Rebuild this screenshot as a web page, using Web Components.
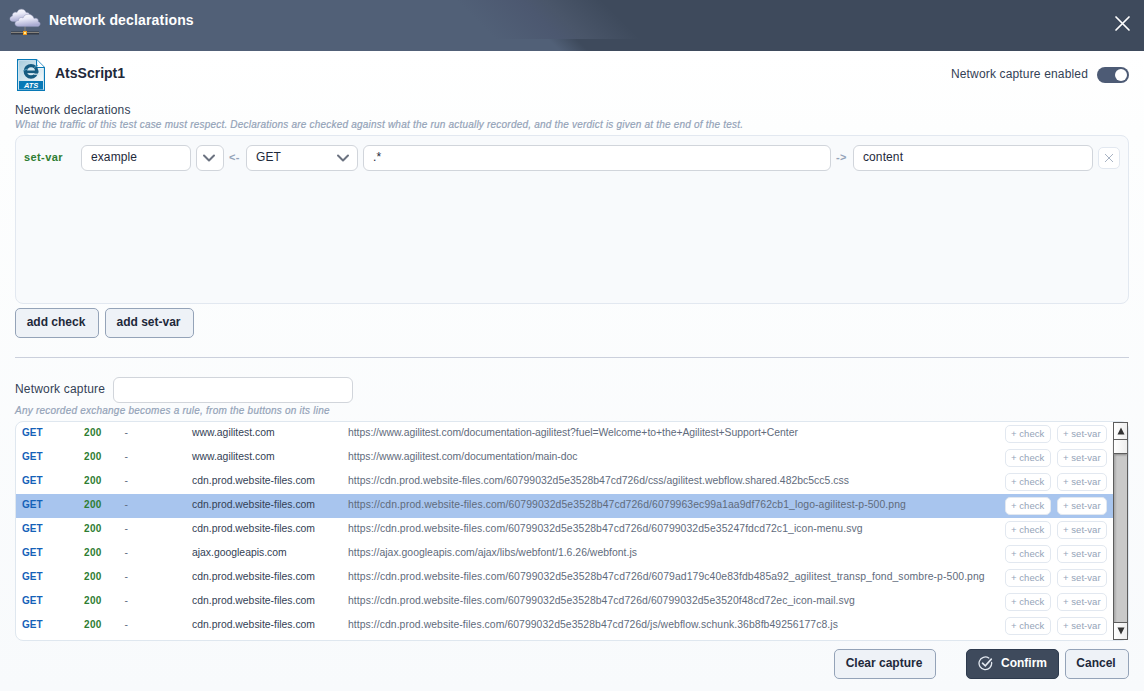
<!DOCTYPE html>
<html lang="en">
<head>
<meta charset="utf-8">
<title>Network declarations</title>
<style>
  body {
    margin: 0;
    font-family: "Liberation Sans", Arial, sans-serif;
    font-size: 12px;
    color: #334155;
  }
</style>
</head>
<body>
<network-dialog></network-dialog>

<script>
class DialogHeader extends HTMLElement {
  constructor() {
    super();
    this.attachShadow({ mode: 'open' });
  }

  connectedCallback() {
    this.shadowRoot.innerHTML = `
      <style>
        :host {
          display: flex;
          height: 51px;
          box-sizing: border-box;
          padding: 7px 13px 0 8px;
          color: #fff;
          background:
            linear-gradient(45deg, #516077 350px, #4c5870 396px, #4a566a 412px, #3e4a5c 453px) 0 0 / 100% 39px no-repeat,
            linear-gradient(45deg, #516077 396px, #3e4a5c 416px);
        }
        .cloud { width: 34px; height: 32px; }
        h1 { margin: 5px 0 0 7px; font-size: 14px; line-height: 17px; letter-spacing: 0.16px; flex: 1; }
        .close { width: 17px; height: 17px; margin-top: 7.500px; }
      </style>
      <svg class="cloud" viewBox="0 0 34 32">
        <defs>
          <linearGradient id="c" x1="0" y1="0" x2=".25" y2="1">
            <stop offset="0" stop-color="#fff"/><stop offset=".45" stop-color="#e9eaf8"/><stop offset="1" stop-color="#a9abd2"/>
          </linearGradient>
        </defs>
        <path d="M3 26h28" stroke="#343a45" stroke-width="3"/>
        <path d="M3 25.500h28M17 19v5" stroke="#85827d" stroke-width="1"/>
        <path d="M5 14.500C1 14.500 1 9.500 4.500 9C4 5.500 7 4.500 9 5.500C10 1 17 1 18 5.500C21.500 5 23 9 21 11L18 14.500Z" fill="url(#c)" stroke="#9fa3c6" stroke-width=".4"/>
        <path d="M11 19.600C5.500 19.600 6 13.500 10.500 13.500C10.500 10.500 13.500 10 15 11C16.500 5.500 25 6.500 26 11.500C29.500 10.500 31 13 30 14.500C33.500 15.500 32.500 19.600 29 19.600Z" fill="url(#c)" stroke="#8f94b8" stroke-width=".5"/>
        <rect x="15" y="24" width="4" height="4" fill="#f39a1c"/>
        <rect x="16" y="25" width="2" height="2" fill="#ffe98e"/>
      </svg>
      <h1><slot></slot></h1>
      <svg class="close" viewBox="0 0 17 17"><path d="M2 2l13 13M15 2L2 15" stroke="#fff" stroke-width="1.700" stroke-linecap="round"/></svg>
    `;
  }
}
customElements.define('dialog-header', DialogHeader);

class ScriptTitle extends HTMLElement {
  constructor() {
    super();
    this.attachShadow({ mode: 'open' });
  }

  connectedCallback() {
    this.shadowRoot.innerHTML = `
      <style>
        :host { display: flex; height: 34px; }
        svg { width: 28px; height: 32px; margin: 0 10px 0 2px; }
        strong { font-size: 14px; line-height: 17px; margin-top: 6px; color: #1e293b; }
        text { font: italic bold 7.500px "Liberation Sans", sans-serif; }
      </style>
      <svg viewBox="0 0 28 32">
        <defs>
          <linearGradient id="p" x1="0" y1="0" x2="1" y2="1">
            <stop offset="0" stop-color="#a9cddd"/><stop offset="1" stop-color="#f2f8fb"/>
          </linearGradient>
        </defs>
        <path d="M.6.6H19.500L27.400 8.500V31.400H.6Z" fill="#fff" stroke="#0879b6" stroke-width="1.200"/>
        <path d="M2 2H18.500V9.500H26V22H2Z" fill="url(#p)"/>
        <path d="M19.500.6V8.500H27.400" fill="#fff" stroke="#0879b6" stroke-width="1.200"/>
        <rect x="2" y="22" width="24" height="8.500" fill="#0879b6"/>
        <ellipse cx="14" cy="12.300" rx="5.700" ry="5.700" fill="#d5e9f1" stroke="#155b80" stroke-width="3.400"/>
        <path d="M9 12.800H21.300" stroke="#155b80" stroke-width="2.600"/>
        <path d="M17 15.200H22.500" stroke="#cfe3ec" stroke-width="1.200"/>
        <path d="M6.500 11.500l4-1.500M17 8.500l4-2" stroke="#4f9bbd" stroke-width="1"/>
        <text x="6.900" y="29" fill="#fff">ATS</text>
      </svg>
      <strong><slot></slot></strong>
    `;
  }
}
customElements.define('script-title', ScriptTitle);

class ToggleSwitch extends HTMLElement {
  constructor() {
    super();
    this.attachShadow({ mode: 'open' });
  }

  connectedCallback() {
    this.shadowRoot.innerHTML = `
      <style>
        :host { display: flex; gap: 9px; letter-spacing: 0.16px; line-height: 14px; }
        .label { margin-top: 8px; }
        .track {
          width: 32px; height: 16px; box-sizing: border-box; margin-top: 8px;
          padding: 2px; border-radius: 8px; background: #4d5b75;
          display: flex; justify-content: flex-end;
        }
        .knob { width: 12px; height: 12px; border-radius: 50%; background: #fff; }
      </style>
      <span class="label"><slot></slot></span>
      <div class="track"><div class="knob"></div></div>
    `;
  }
}
customElements.define('toggle-switch', ToggleSwitch);

class FieldBox extends HTMLElement {
  constructor() {
    super();
    this.attachShadow({ mode: 'open' });
  }

  connectedCallback() {
    const arrow = this.hasAttribute('arrow')
      ? '<svg viewBox="0 0 14 8"><path d="M2 1.500l5 5 5-5" fill="none" stroke="#6b7280" stroke-width="2" stroke-linecap="round" stroke-linejoin="round"/></svg>'
      : '';
    this.shadowRoot.innerHTML = `
      <style>
        :host {
          display: flex; box-sizing: border-box; height: 26px;
          border: 1px solid #d1d5db; border-radius: 6px; background: #fff;
          color: #1e293b; line-height: 14px; padding: 4px 7px 0 9px;
          letter-spacing: 0.1px;
          justify-content: space-between;
        }
        :host([compact]) { padding-left: 5px; padding-right: 7px; }
        svg { width: 14px; height: 8px; margin-top: 4px; flex: none; }
      </style>
      <slot></slot>${arrow}
    `;
  }
}
customElements.define('field-box', FieldBox);

class ActionButton extends HTMLElement {
  constructor() {
    super();
    this.attachShadow({ mode: 'open' });
  }

  connectedCallback() {
    const icon = this.hasAttribute('primary')
      ? `<svg viewBox="0 0 15 15" fill="none" stroke="#e2e8f0" stroke-linecap="round">
           <path d="M10.800 2A6.300 6.300 0 1 0 13.600 6.500" stroke-width="1.300"/>
           <path d="M4.500 7.200l2.800 2.700 6-6.800" stroke-width="1.600"/>
         </svg>`
      : '';
    this.shadowRoot.innerHTML = `
      <style>
        :host {
          display: flex; box-sizing: border-box; height: 30px;
          justify-content: center; padding: 6px 2px 0 0;
          border: 1px solid #94a3b8; border-radius: 5px;
          background: #eef2f7; color: #1e293b;
          font-weight: bold; line-height: 14px; white-space: nowrap;
        }
        :host([primary]) { background: #3e4a5c; border-color: #2d3a4d; color: #fff; padding-right: 0; }
        svg { width: 15px; height: 15px; margin-right: 8px; }
      </style>
      ${icon}<slot></slot>
    `;
  }
}
customElements.define('action-button', ActionButton);

class DeclarationRow extends HTMLElement {
  constructor() {
    super();
    this.attachShadow({ mode: 'open' });
  }

  connectedCallback() {
    this.shadowRoot.innerHTML = `
      <style>
        :host { display: grid; grid-template-columns: 52px 110px 28px 12px 112px 468px 12px 240px 22px; column-gap: 5px; }
        .kind { color: #2e7d32; font-size: 11px; font-weight: bold; line-height: 14px; padding-top: 5px; letter-spacing: 0.4px; }
        .op { color: #94a3b8; font-size: 11px; font-weight: bold; line-height: 14px; padding-top: 5px; letter-spacing: 0.3px; }
        .remove {
          box-sizing: border-box; width: 22px; height: 22px; margin-top: 2px; padding: 5px;
          border: 1px solid #e2e8f0; border-radius: 5px; background: #fff;
        }
        .remove svg { display: block; width: 10px; height: 10px; }
      </style>
      <span class="kind">${this.getAttribute('kind')}</span>
      <field-box>${this.getAttribute('name')}</field-box>
      <field-box arrow compact></field-box>
      <span class="op">&lt;-</span>
      <field-box arrow>${this.getAttribute('method')}</field-box>
      <field-box>${this.getAttribute('pattern')}</field-box>
      <span class="op">-&gt;</span>
      <field-box>${this.getAttribute('target')}</field-box>
      <div class="remove"><svg viewBox="0 0 10 10"><path d="M1 1l8 8M9 1L1 9" stroke="#a8b3c3" stroke-width="1"/></svg></div>
    `;
  }
}
customElements.define('declaration-row', DeclarationRow);

class CaptureRow extends HTMLElement {
  constructor() {
    super();
    this.attachShadow({ mode: 'open' });
  }

  connectedCallback() {
    this.shadowRoot.innerHTML = `
      <style>
        :host {
          display: grid; grid-template-columns: 62px 40px 68px 156px 657px 52px 50px;
          height: 24px; box-sizing: border-box; padding-left: 6px;
          font-size: 10.400px; line-height: 12px; white-space: nowrap;
        }
        :host([selected]) { background: #a8c5ee; }
        span { padding-top: 5px; }
        .method, .status { font-size: 10px; font-weight: bold; }
        .method { color: #1561b8; }
        .status { color: #2e7d32; letter-spacing: 0.35px; }
        .dash, .url { color: #5f6b7c; }
        .dash { padding-left: 0.500px; }
        .url { letter-spacing: ${this.getAttribute('tracking')}px; }
        .add {
          box-sizing: border-box; height: 18px; margin-top: 3px; padding: 2px 0 0 5px;
          border: 1px solid #e2e8f0; border-radius: 5px; background: #fff;
          color: #94a3b8; font-size: 9.500px; letter-spacing: 0.050px;
        }
        .check { width: 46px; }
      </style>
      <span class="method">GET</span>
      <span class="status">200</span>
      <span class="dash">-</span>
      <span>${this.getAttribute('host')}</span>
      <span class="url">https://${this.getAttribute('host')}/${this.getAttribute('path')}</span>
      <div class="add check">+ check</div>
      <div class="add">+ set-var</div>
    `;
  }
}
customElements.define('capture-row', CaptureRow);

class ScrollTrack extends HTMLElement {
  constructor() {
    super();
    this.attachShadow({ mode: 'open' });
  }

  connectedCallback() {
    this.shadowRoot.innerHTML = `
      <style>
        :host {
          display: flex; flex-direction: column; box-sizing: border-box;
          width: 15px; height: 218px; border: 1px solid #5c5c5c;
          background: linear-gradient(90deg, #a5a5a5, #c9c9c9 3px);
        }
        .cap { height: 16px; background: linear-gradient(90deg, #fff, #eee); display: grid; place-items: center; }
        .up, .thumb { border-bottom: 1px solid #5c5c5c; }
        .thumb { height: 13px; background: linear-gradient(90deg, #fff, #eee); box-shadow: 0 1px 2px #888; }
        .down { margin-top: auto; border-top: 1px solid #5c5c5c; }
        svg { width: 8px; height: 8px; }
      </style>
      <div class="cap up"><svg viewBox="0 0 8 8"><path d="M4 .5L7.500 7.500H.5Z" fill="#333"/></svg></div>
      <div class="thumb"></div>
      <div class="cap down"><svg viewBox="0 0 8 8"><path d="M4 7.500L7.500.5H.5Z" fill="#333"/></svg></div>
    `;
  }
}
customElements.define('scroll-track', ScrollTrack);

// host, path, letter spacing of the url
const captures = [
  ['www.agilitest.com', 'documentation-agilitest?fuel=Welcome+to+the+Agilitest+Support+Center', -0.03],
  ['www.agilitest.com', 'documentation/main-doc', -0.02],
  ['cdn.prod.website-files.com', '60799032d5e3528b47cd726d/css/agilitest.webflow.shared.482bc5cc5.css', 0.03],
  ['cdn.prod.website-files.com', '60799032d5e3528b47cd726d/6079963ec99a1aa9df762cb1_logo-agilitest-p-500.png', 0.1],
  ['cdn.prod.website-files.com', '60799032d5e3528b47cd726d/60799032d5e35247fdcd72c1_icon-menu.svg', 0.087],
  ['ajax.googleapis.com', 'ajax/libs/webfont/1.6.26/webfont.js', 0.03],
  ['cdn.prod.website-files.com', '60799032d5e3528b47cd726d/6079ad179c40e83fdb485a92_agilitest_transp_fond_sombre-p-500.png', 0.09],
  ['cdn.prod.website-files.com', '60799032d5e3528b47cd726d/60799032d5e3520f48cd72ec_icon-mail.svg', 0.08],
  ['cdn.prod.website-files.com', '60799032d5e3528b47cd726d/js/webflow.schunk.36b8fb49256177c8.js', 0.066],
];

class NetworkDialog extends HTMLElement {
  constructor() {
    super();
    this.attachShadow({ mode: 'open' });
  }

  connectedCallback() {
    const rows = captures.map(([host, path, tracking], i) =>
      `<capture-row host="${host}" path="${path}" tracking="${tracking}" ${i === 3 ? 'selected' : ''}></capture-row>`).join('');

    this.shadowRoot.innerHTML = `
      <style>
        :host { display: flex; flex-direction: column; height: 691px; background: linear-gradient(#fff 51px, #fdfefe 130px, #f8fafc); }
        main { padding: 8px 15px 0; }
        .top { display: flex; justify-content: space-between; height: 44px; }
        .label { line-height: 14px; letter-spacing: 0.18px; white-space: nowrap; }
        .hint { height: 12px; line-height: 12px; font-size: 10px; font-style: italic; color: #94a3b8; -webkit-text-stroke: 0.2px #94a3b8; }
        .hint.first { margin: 2px 0 4px; letter-spacing: 0.21px; }
        .declarations {
          height: 169px; box-sizing: border-box; padding: 9px 8px;
          border: 1px solid #e2e8f0; border-radius: 8px; background: #f8fafc;
        }
        .add { display: flex; gap: 6px; margin-top: 4px; }
        hr { margin: 19px 0; height: 1px; border: 0; background: #cbd0dc; }
        .filter { display: flex; gap: 9px; height: 26px; }
        .filter .label { width: 89px; margin-top: 5px; }
        .filter field-box { width: 240px; }
        .hint.second { margin: 2px 0 4px; letter-spacing: 0.23px; }
        .capture {
          display: flex; height: 220px; box-sizing: border-box;
          border: 1px solid #dfe7ef; border-radius: 8px; background: #fff;
        }
        .rows { flex: 1; }
        footer { display: flex; justify-content: flex-end; gap: 6px; margin-top: 8px; }
        .clear { width: 102px; margin-right: 24px; }
      </style>
      <dialog-header>Network declarations</dialog-header>
      <main>
        <div class="top">
          <script-title>AtsScript1</script-title>
          <toggle-switch>Network capture enabled</toggle-switch>
        </div>
        <div class="label">Network declarations</div>
        <div class="hint first">What the traffic of this test case must respect. Declarations are checked against what the run actually recorded, and the verdict is given at the end of the test.</div>
        <div class="declarations">
          <declaration-row kind="set-var" name="example" method="GET" pattern=".*" target="content"></declaration-row>
        </div>
        <div class="add">
          <action-button style="width: 84px">add check</action-button>
          <action-button style="width: 89px">add set-var</action-button>
        </div>
        <hr>
        <div class="filter">
          <div class="label">Network capture</div>
          <field-box></field-box>
        </div>
        <div class="hint second">Any recorded exchange becomes a rule, from the buttons on its line</div>
        <div class="capture">
          <div class="rows">${rows}</div>
          <scroll-track></scroll-track>
        </div>
        <footer>
          <action-button class="clear">Clear capture</action-button>
          <action-button primary style="width: 93px">Confirm</action-button>
          <action-button style="width: 64px">Cancel</action-button>
        </footer>
      </main>
    `;
  }
}
customElements.define('network-dialog', NetworkDialog);
</script>
</body>
</html>
